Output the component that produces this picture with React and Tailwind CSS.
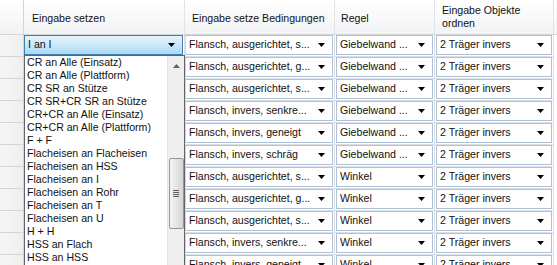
import React from 'react';

const COL2 = [
    'Flansch, ausgerichtet, s...',
    'Flansch, ausgerichtet, g...',
    'Flansch, ausgerichtet, s...',
    'Flansch, invers, senkre...',
    'Flansch, invers, geneigt',
    'Flansch, invers, schräg',
    'Flansch, ausgerichtet, s...',
    'Flansch, ausgerichtet, g...',
    'Flansch, ausgerichtet, s...',
    'Flansch, invers, senkre...',
    'Flansch, invers, geneigt',
];

const OPTIONS = [
    'CR an Alle (Einsatz)',
    'CR an Alle (Plattform)',
    'CR SR an Stütze',
    'CR SR+CR SR an Stütze',
    'CR+CR an Alle (Einsatz)',
    'CR+CR an Alle (Plattform)',
    'F + F',
    'Flacheisen an Flacheisen',
    'Flacheisen an HSS',
    'Flacheisen an I',
    'Flacheisen an Rohr',
    'Flacheisen an T',
    'Flacheisen an U',
    'H + H',
    'HSS an Flach',
    'HSS an HSS',
];

const Arrow = () => (
    <svg width="7" height="4" viewBox="0 0 7 4" className="shrink-0">
        <path d="M0 0 H7 L3.5 4 Z" fill="#000" />
    </svg>
);

// eine Zelle mit Kombobox
const Combo = ({ text, mark }) => (
    <div
        className={
            'h-[20px] w-full flex items-center bg-white border border-[#adc1d8] pl-[3px] pr-[7px] ' +
            (mark ? 'border-l-[#edd3a0]' : '')
        }
    >
        <span className="flex-1 truncate">{text}</span>
        <Arrow />
    </div>
);

const App = () => {
    return (
        <div className="relative w-[557px] h-[265px] overflow-hidden bg-white text-[10.6px] text-[#111] font-['Liberation_Sans',Arial,sans-serif]">
            {/* Kopfzeile */}
            <div className="flex h-[35px] border-b border-[#d5d5d5] bg-gradient-to-b from-[#ffffff] to-[#f2f3f5]">
                <div className="w-[24px] shrink-0 border-r border-[#d5d5d5]" />
                <div className="w-[161px] shrink-0 border-r border-[#e3e3e3] flex items-center pl-[8px] pt-[3px]">Eingabe setzen</div>
                <div className="w-[150px] shrink-0 border-r border-[#e3e3e3] flex items-center pl-[7px] pt-[3px]">Eingabe setze Bedingungen</div>
                <div className="w-[100px] shrink-0 border-r border-[#e3e3e3] flex items-center pl-[6px] pt-[3px]">Regel</div>
                <div className="w-[119px] shrink-0 border-r border-[#e3e3e3] flex flex-col justify-center pl-[7px] leading-[13px]">
                    <span>Eingabe Objekte</span>
                    <span>ordnen</span>
                </div>
            </div>

            {/* Zeilen */}
            {COL2.map((c2, i) => (
                <div key={i} className="flex h-[22px]">
                    <div className="w-[24px] shrink-0 bg-gradient-to-r from-[#f6f6f6] to-[#efefef] border-r border-b border-[#d5d5d5]" />
                    <div className="w-[161px] shrink-0 border-r border-b border-[#dcdfe3] pr-[1px] pb-[1px]">
                        {i === 0 ? (
                            <div className="h-[20px] flex items-center border border-[#3c7fb1] bg-gradient-to-b from-[#e6f4fc] via-[#cbe8f8] to-[#a9d8f3] pl-[3px] pr-[7px]">
                                <span className="flex-1">I an I</span>
                                <Arrow />
                            </div>
                        ) : null}
                    </div>
                    <div className="w-[150px] shrink-0 border-r border-b border-[#dcdfe3] pr-[1px] pb-[1px]">
                        <Combo text={c2} mark />
                    </div>
                    <div className="w-[100px] shrink-0 border-r border-b border-[#dcdfe3] pl-[1px] pr-[1px] pb-[1px]">
                        <Combo text={i < 6 ? 'Giebelwand ...' : 'Winkel'} />
                    </div>
                    <div className="w-[119px] shrink-0 border-r border-b border-[#dcdfe3] pl-[1px] pr-[1px] pb-[1px]">
                        <Combo text="2 Träger invers" />
                    </div>
                </div>
            ))}

            {/* Aufgeklappte Liste */}
            <div className="absolute left-[24px] top-[55px] w-[161px] h-[215px] bg-white border border-[#646464] flex">
                <div className="flex-1 pl-[2px] overflow-hidden">
                    {OPTIONS.map((o) => (
                        <div key={o} className="h-[13px] leading-[13px] whitespace-nowrap">{o}</div>
                    ))}
                </div>
                <div className="w-[17px] shrink-0 bg-[#efefef] border-l border-[#e2e2e2] flex flex-col items-center">
                    <div className="h-[19px] flex items-center justify-center">
                        <svg width="7" height="4" viewBox="0 0 7 4">
                            <path d="M0 4 H7 L3.5 0 Z" fill="#606060" />
                        </svg>
                    </div>
                    <div className="mt-[83px] w-[15px] h-[71px] rounded-[2px] border border-[#979797] bg-gradient-to-r from-[#f4f4f4] to-[#d6d6d6] flex flex-col items-center justify-center gap-[1px]">
                        <div className="w-[6px] h-[1px] bg-[#5e5e5e]" />
                        <div className="w-[6px] h-[1px] bg-[#5e5e5e]" />
                        <div className="w-[6px] h-[1px] bg-[#5e5e5e]" />
                        <div className="w-[6px] h-[1px] bg-[#5e5e5e]" />
                    </div>
                </div>
            </div>
        </div>
    );
};

export default App;
